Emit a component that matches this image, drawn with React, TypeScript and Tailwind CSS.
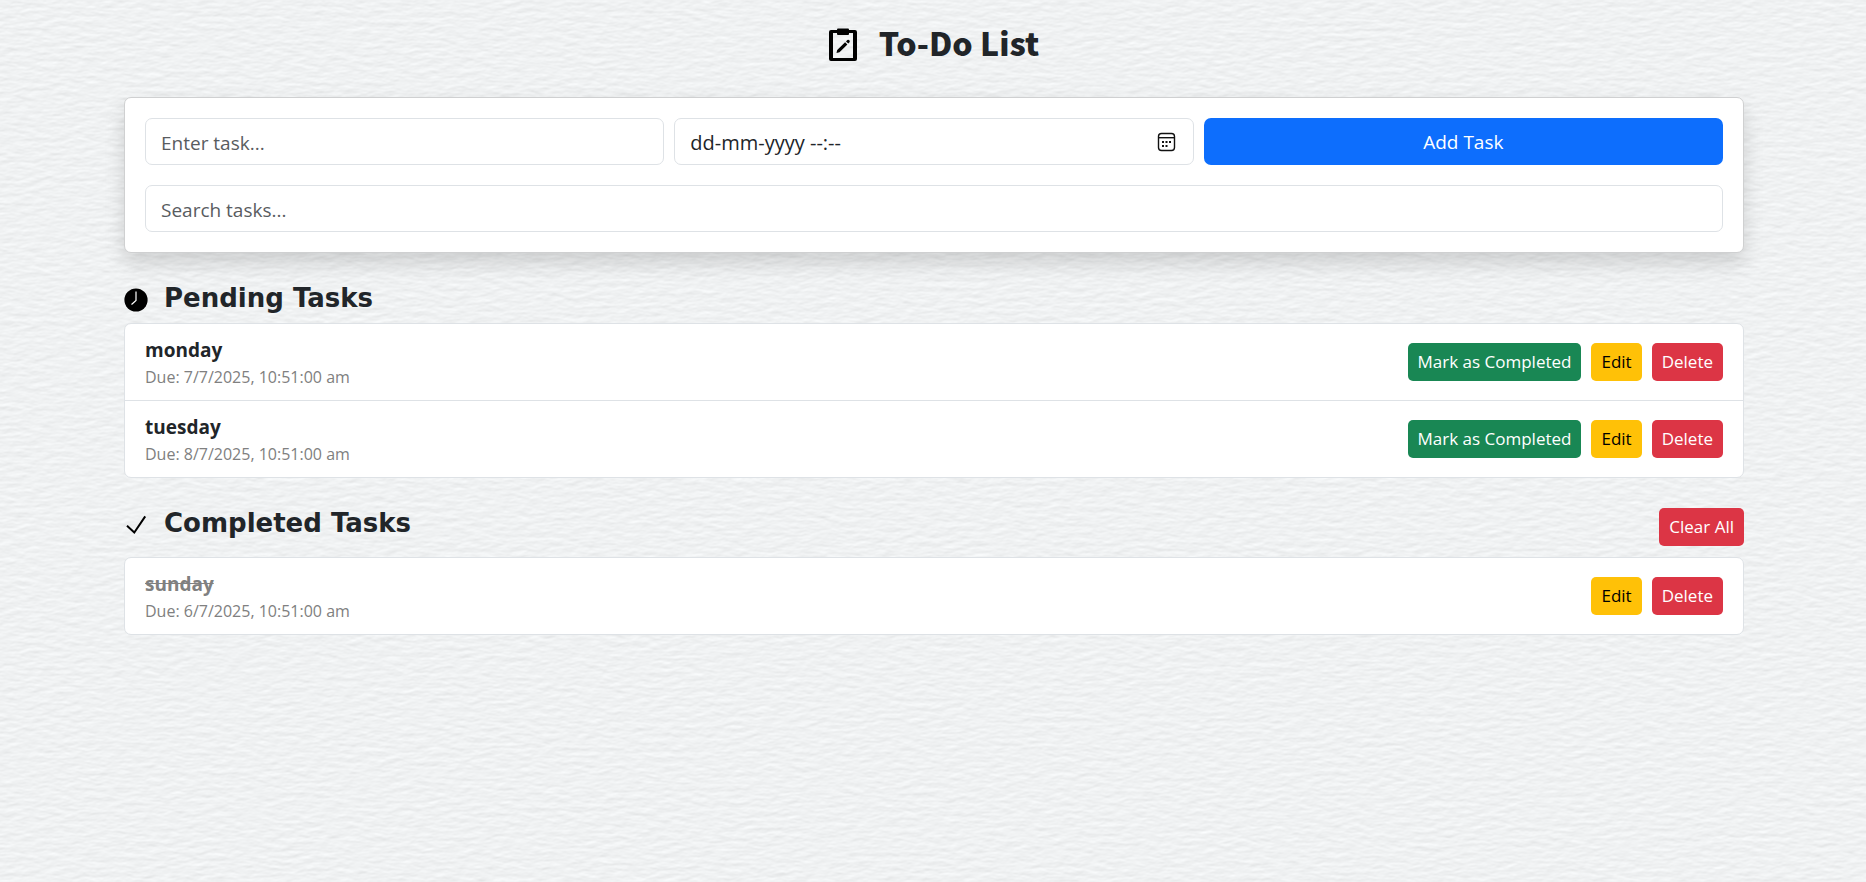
import React from "react";

type Task = { id: number; name: string; due: string };

const pending: Task[] = [
  { id: 1, name: "monday", due: "7/7/2025, 10:51:00 am" },
  { id: 2, name: "tuesday", due: "8/7/2025, 10:51:00 am" },
];
const completed: Task[] = [{ id: 3, name: "sunday", due: "6/7/2025, 10:51:00 am" }];

function PaperTexture() {
  return (
    <svg className="absolute inset-0 -z-10 h-full w-full" aria-hidden="true">
      <filter id="paper" x="0" y="0" width="100%" height="100%" colorInterpolationFilters="sRGB">
        <feTurbulence type="fractalNoise" baseFrequency="0.07 0.2" numOctaves="3" seed="8" />
        <feDiffuseLighting surfaceScale="0.18" diffuseConstant="1.097" lightingColor="#fcfeff">
          <feDistantLight azimuth="255" elevation="60" />
        </feDiffuseLighting>
      </filter>
      <rect width="100%" height="100%" filter="url(#paper)" />
    </svg>
  );
}

function ClipboardIcon() {
  return (
    <svg width="28" height="34" viewBox="0 0 28 34" aria-hidden="true">
      <path fillRule="evenodd" d="M2 2h6v3H4v25h20V5h-4V2h6q2 0 2 2v27q0 2-2 2H2q-2 0-2-2V4q0-2 2-2Z" />
      <rect x="8" y="0.500" width="12" height="6.500" rx="1" />
      <path d="M7.500 25l.7-3.100 7.900-7.600 2.300 2.300-7.900 7.600ZM17 13.400l1.400-1.300q1-.7 1.900.2t.2 1.900l-1.200 1.300Z" />
    </svg>
  );
}

function ClockIcon() {
  return (
    <svg width="24" height="24" viewBox="0 0 24 24" aria-hidden="true">
      <circle cx="12" cy="12" r="11.600" />
      <path d="M12 3.500V12.500L7.500 16.500" fill="none" stroke="#fff" strokeWidth="1.200" />
    </svg>
  );
}

function CheckIcon() {
  return (
    <svg width="24" height="24" viewBox="0 0 24 24" aria-hidden="true">
      <path d="M3 12.700L10.300 19.500L21.200 3.400" fill="none" stroke="#000" strokeWidth="2" />
    </svg>
  );
}

function CalendarIcon() {
  return (
    <svg width="20" height="20" viewBox="0 0 20 20" fill="none" aria-hidden="true">
      <rect x="2.500" y="1.500" width="16" height="17" rx="3" stroke="#111" strokeWidth="1.400" />
      <path d="M2.500 5.700H18.500" stroke="#111" strokeWidth="1.400" />
      <path d="M6 10h2M9.500 10h2M13 10h2M6 14h2M9.500 14h2" stroke="#111" strokeWidth="2" />
    </svg>
  );
}

const field =
  "h-[47px] w-full rounded-[7px] border border-[#dee2e6] bg-white px-[15px] pt-[2px] outline-none focus:border-[#86b7fe]";
const small = "h-[38px] rounded-[5px] px-[10px] text-[17px] leading-[26px]";
const sectionTitle = "font-['DejaVu_Sans',sans-serif] text-[26px] leading-[30px] font-bold";

function TaskList({ tasks, done = false }: { tasks: Task[]; done?: boolean }) {
  return (
    <ul className="divide-y divide-[#dee2e6] rounded-[7px] border border-[#dee2e6] bg-white">
      {tasks.map((t) => (
        <li key={t.id} className="flex items-center justify-between px-5">
          <div className="py-[11px]">
            <strong
              className={
                done
                  ? "block text-[19px] leading-[30px] font-bold text-[#808080] line-through"
                  : "block text-[19px] leading-[30px] font-bold"
              }
            >
              {t.name}
            </strong>
            <small className="block text-[16px] leading-[24px] text-[#808080]">Due: {t.due}</small>
          </div>
          <div className="flex gap-[10px]">
            {!done && <button className={`${small} bg-[#198754] text-white`}>Mark as Completed</button>}
            <button className={`${small} bg-[#ffc107] text-black`}>Edit</button>
            <button className={`${small} bg-[#dc3545] text-white`}>Delete</button>
          </div>
        </li>
      ))}
    </ul>
  );
}

export default function App() {
  return (
    <div className="relative isolate min-h-screen bg-[#f0f2f3] font-['Open_Sans','Noto_Sans',sans-serif] text-[#212529]">
      <PaperTexture />
      <main className="mx-auto max-w-[1650px] pr-[14px] pl-4">
        <header className="flex h-[97px] justify-center gap-[22px] pt-[14px]">
          <div className="pt-[14px]">
            <ClipboardIcon />
          </div>
          <h1 className="font-['Noto_Sans_CJK_JP',sans-serif] text-[32px] leading-[56px] font-black">To-Do List</h1>
        </header>

        <form
          onSubmit={(e) => e.preventDefault()}
          className="rounded-[7px] border border-[#cfd0d1] bg-white p-5 shadow-[0_10px_20px_rgba(0,0,0,0.15)]"
        >
          <div className="grid grid-cols-3 gap-[10px]">
            <input
              aria-label="Task"
              placeholder="Enter task..."
              className={`${field} text-[19px] placeholder:text-[#595c5f]`}
            />
            <div className="relative">
              <input
                aria-label="Due date"
                placeholder="dd-mm-yyyy --:--"
                className={`${field} text-[20px] placeholder:text-[#212529]`}
              />
              <button type="button" aria-label="Pick a date" className="absolute top-[14px] right-[18px]">
                <CalendarIcon />
              </button>
            </div>
            <button type="submit" className="h-[47px] rounded-[7px] bg-[#0d6efd] pt-[2px] text-[19px] text-white">
              Add Task
            </button>
          </div>
          <input
            type="search"
            aria-label="Search tasks"
            placeholder="Search tasks..."
            className={`${field} mt-5 block text-[19px] placeholder:text-[#595c5f]`}
          />
        </form>

        <section className="pt-[30px]">
          <div className="flex h-[40px] gap-4">
            <div className="pt-[5px]">
              <ClockIcon />
            </div>
            <h2 className={sectionTitle}>Pending Tasks</h2>
          </div>
          <TaskList tasks={pending} />
        </section>

        <section className="pt-[30px]">
          <div className="flex h-[49px] items-start justify-between">
            <div className="flex gap-4">
              <div className="pt-[5px]">
                <CheckIcon />
              </div>
              <h2 className={sectionTitle}>Completed Tasks</h2>
            </div>
            <button className={`${small} bg-[#dc3545] text-white`}>Clear All</button>
          </div>
          <TaskList tasks={completed} done />
        </section>
      </main>
    </div>
  );
}
